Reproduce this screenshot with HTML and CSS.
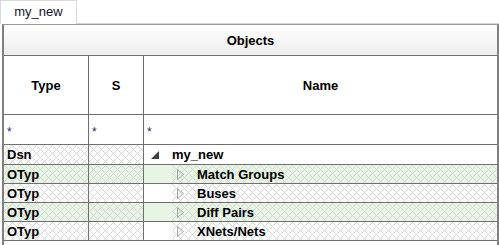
FILE: index.html
```html
<!DOCTYPE html>
<html lang="en">
<head>
    <meta charset="UTF-8">
    <meta name="viewport" content="width=device-width, initial-scale=1.0">
    <title>my_new</title>
    <link rel="stylesheet" href="styles.css">
</head>
<body>
    <div class="tabs">
        <div class="tab">my_new</div>
        <div class="tab-rest"></div>
    </div>

    <div class="panel">
        <div class="row title-row">Objects</div>

        <div class="row head-row">
            <div class="cell col-type">Type</div>
            <div class="cell col-s">S</div>
            <div class="cell col-name">Name</div>
        </div>

        <div class="row filter-row">
            <div class="cell col-type">*</div>
            <div class="cell col-s">*</div>
            <div class="cell col-name">*</div>
        </div>

        <div class="row item-row root-row">
            <div class="cell col-type hatch">Dsn</div>
            <div class="cell col-s hatch"></div>
            <div class="cell col-name">
                <div class="node level-0">
                    <svg class="expander" width="8" height="8" viewBox="0 0 8 8"><polygon points="8,0 8,8 0,8" fill="#404040"/></svg>
                    <span>my_new</span>
                </div>
            </div>
        </div>

        <div class="row item-row green">
            <div class="cell col-type hatch">OTyp</div>
            <div class="cell col-s hatch"></div>
            <div class="cell col-name">
                <div class="node level-1 hatch">
                    <svg class="expander" width="7" height="11" viewBox="0 0 7 11"><polygon points="0.5,0.5 6.5,5.5 0.5,10.5" fill="none" stroke="#a6a6a6"/></svg>
                    <span>Match Groups</span>
                </div>
            </div>
        </div>

        <div class="row item-row">
            <div class="cell col-type hatch">OTyp</div>
            <div class="cell col-s hatch"></div>
            <div class="cell col-name">
                <div class="node level-1 hatch">
                    <svg class="expander" width="7" height="11" viewBox="0 0 7 11"><polygon points="0.5,0.5 6.5,5.5 0.5,10.5" fill="none" stroke="#a6a6a6"/></svg>
                    <span>Buses</span>
                </div>
            </div>
        </div>

        <div class="row item-row green">
            <div class="cell col-type hatch">OTyp</div>
            <div class="cell col-s hatch"></div>
            <div class="cell col-name">
                <div class="node level-1 hatch">
                    <svg class="expander" width="7" height="11" viewBox="0 0 7 11"><polygon points="0.5,0.5 6.5,5.5 0.5,10.5" fill="none" stroke="#a6a6a6"/></svg>
                    <span>Diff Pairs</span>
                </div>
            </div>
        </div>

        <div class="row item-row">
            <div class="cell col-type hatch">OTyp</div>
            <div class="cell col-s hatch"></div>
            <div class="cell col-name">
                <div class="node level-1 hatch">
                    <svg class="expander" width="7" height="11" viewBox="0 0 7 11"><polygon points="0.5,0.5 6.5,5.5 0.5,10.5" fill="none" stroke="#a6a6a6"/></svg>
                    <span>XNets/Nets</span>
                </div>
            </div>
        </div>
    </div>
</body>
</html>
```

FILE: styles.css
```css
html, body {
    height: 100%;
}
body {
    margin: 0;
    font-family: "Liberation Sans", Arial, sans-serif;
    background: #fff;
    color: #000;
    overflow: hidden;
    display: flex;
    flex-direction: column;
}
.tabs {
    display: flex;
    height: 24px;
    flex-shrink: 0;
}
.tab {
    width: 75px;
    height: 23px;
    border: 1px solid #d9d9d9;
    border-bottom: none;
    background: #fff;
    font-size: 13px;
    color: #14142a;
    text-align: center;
    line-height: 21px;
}
.tab-rest {
    flex: 1;
    border-bottom: 1px solid #d4d4d4;
}
.panel {
    flex: 1;
    min-height: 0;
    margin-left: 2px;
    border-left: 2px solid #808080;
    border-right: 2px solid #808080;
    border-top: 1px solid #9a9a9a;
}
.row {
    display: flex;
    border-bottom: 1px solid #6f6f6f;
}
.title-row {
    height: 30px;
    justify-content: center;
    align-items: center;
    font-size: 13px;
    font-weight: bold;
    background: linear-gradient(#ffffff, #eeeeee);
}
.cell {
    border-right: 1px solid #6f6f6f;
    display: flex;
    align-items: center;
    box-sizing: border-box;
}
.col-type {
    width: 85px;
}
.col-s {
    width: 55px;
}
.col-name {
    flex: 1;
    border-right: none;
}
.head-row {
    height: 58px;
    font-size: 13px;
    font-weight: bold;
}
.head-row .cell {
    justify-content: center;
}
.filter-row {
    height: 29px;
    font-size: 12px;
    color: #1f2a66;
}
.filter-row .cell {
    padding: 4px 0 0 3px;
}
.item-row {
    height: 18px;
    font-size: 13px;
    font-weight: bold;
}
.root-row {
    height: 19px;
}
.item-row .col-type {
    padding-left: 3px;
}
.green {
    background-color: #e7f6e3;
}
.hatch {
    background-image: url("data:image/svg+xml;utf8,<svg xmlns='http://www.w3.org/2000/svg' width='8' height='8' shape-rendering='crispEdges'><g fill='%23d6d6d6'><rect x='0' y='0' width='1' height='1'/><rect x='2' y='2' width='1' height='1'/><rect x='4' y='4' width='1' height='1'/><rect x='6' y='6' width='1' height='1'/><rect x='6' y='2' width='1' height='1'/><rect x='2' y='6' width='1' height='1'/><rect x='1' y='1' width='1' height='1'/><rect x='3' y='3' width='1' height='1'/><rect x='5' y='5' width='1' height='1'/><rect x='7' y='7' width='1' height='1'/><rect x='7' y='1' width='1' height='1'/><rect x='5' y='3' width='1' height='1'/><rect x='3' y='5' width='1' height='1'/><rect x='1' y='7' width='1' height='1'/></g></svg>");
}
.node {
    display: flex;
    align-items: center;
    height: 100%;
}
.level-0 {
    padding-left: 7px;
}
.level-0 .expander {
    margin-right: 13px;
}
.level-1 {
    flex: 1;
    margin-left: 28px;
    padding-left: 5px;
}
.level-1 .expander {
    margin-right: 13px;
}
.col-name:has(.node) {
    align-items: stretch;
}
```
